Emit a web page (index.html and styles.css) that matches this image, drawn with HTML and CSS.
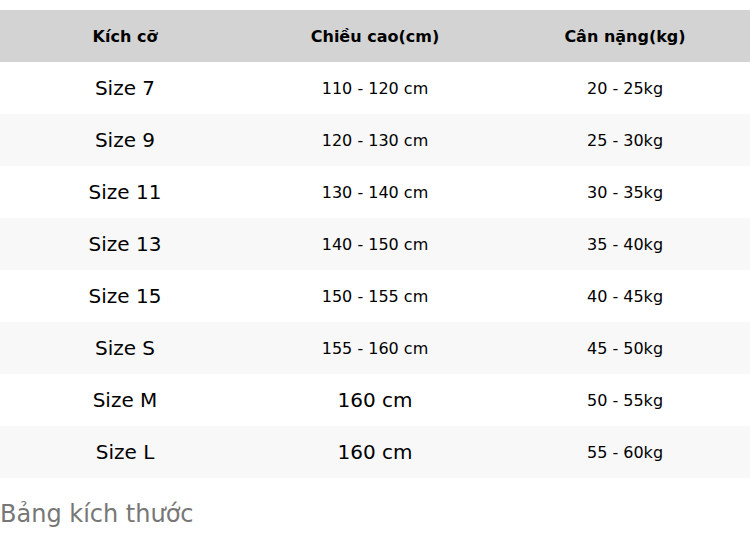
FILE: index.html
```html
<!DOCTYPE html>
<html lang="vi">
<head>
<meta charset="utf-8">
<link rel="stylesheet" href="styles.css">
</head>
<body>
<div class="wrap">
  <table class="size-table">
    <thead>
      <tr><th>Kích cỡ</th><th>Chiều cao(cm)</th><th>Cân nặng(kg)</th></tr>
    </thead>
    <tbody>
      <tr><td class="big">Size 7</td><td>110 - 120 cm</td><td>20 - 25kg</td></tr>
      <tr><td class="big">Size 9</td><td>120 - 130 cm</td><td>25 - 30kg</td></tr>
      <tr><td class="big">Size 11</td><td>130 - 140 cm</td><td>30 - 35kg</td></tr>
      <tr><td class="big">Size 13</td><td>140 - 150 cm</td><td>35 - 40kg</td></tr>
      <tr><td class="big">Size 15</td><td>150 - 155 cm</td><td>40 - 45kg</td></tr>
      <tr><td class="big">Size S</td><td>155 - 160 cm</td><td>45 - 50kg</td></tr>
      <tr><td class="big">Size M</td><td class="big">160 cm</td><td>50 - 55kg</td></tr>
      <tr><td class="big">Size L</td><td class="big">160 cm</td><td>55 - 60kg</td></tr>
    </tbody>
  </table>
  <div class="caption">Bảng kích thước</div>
</div>
</body>
</html>
```
FILE: styles.css
```css
html, body {
  margin: 0;
  padding: 0;
  background: #fff;
}
body {
  font-family: "DejaVu Sans", sans-serif;
  color: #000;
}
.wrap {
  padding-top: 10px;
}
.size-table {
  width: 750px;
  border-collapse: collapse;
  table-layout: fixed;
}
.size-table th,
.size-table td {
  height: 52px;
  padding: 0;
  text-align: center;
  vertical-align: middle;
  font-size: 16px;
}
.size-table th {
  background: #d3d3d3;
  font-weight: bold;
}
.size-table td.big {
  font-size: 20px;
}
.size-table tbody tr:nth-child(even) {
  background: #f8f8f8;
}
.caption {
  margin-top: 22px;
  font-size: 24px;
  line-height: 28px;
  color: #777;
}
```
